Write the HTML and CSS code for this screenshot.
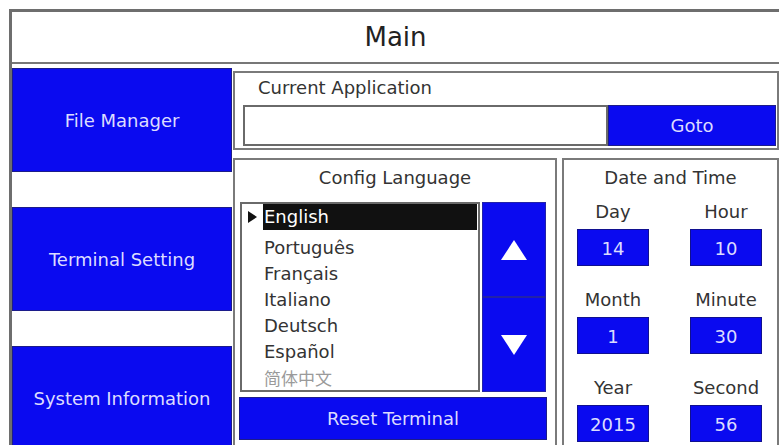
FILE: index.html
```html
<!DOCTYPE html>
<html lang="en">
<head>
    <meta charset="UTF-8">
    <meta name="viewport" content="width=device-width, initial-scale=1.0">
    <title>Main</title>
    <link rel="stylesheet" href="styles.css">
</head>
<body>
    <div class="screen">
        <div class="frame">
            <header class="title">Main</header>

            <div class="body">
                <nav class="menu">
                    <button class="menu-btn">File Manager</button>
                    <button class="menu-btn">Terminal Setting</button>
                    <button class="menu-btn">System Information</button>
                </nav>

                <main class="content">
                    <section class="panel app">
                        <div class="app-title">Current Application</div>
                        <div class="app-row">
                            <div class="app-field"></div>
                            <button class="goto">Goto</button>
                        </div>
                    </section>

                    <div class="lower">
                        <section class="panel lang">
                            <div class="panel-title">Config Language</div>
                            <div class="lang-row">
                                <ul class="lang-list">
                                    <li class="lang-item selected">
                                        <span class="marker">
                                            <svg width="9" height="12" viewBox="0 0 9 12"><polygon points="0,0 9,6 0,12" fill="#111"/></svg>
                                        </span>
                                        <span class="lang-name">English</span>
                                    </li>
                                    <li class="lang-item"><span class="marker"></span><span class="lang-name">Português</span></li>
                                    <li class="lang-item"><span class="marker"></span><span class="lang-name">Français</span></li>
                                    <li class="lang-item"><span class="marker"></span><span class="lang-name">Italiano</span></li>
                                    <li class="lang-item"><span class="marker"></span><span class="lang-name">Deutsch</span></li>
                                    <li class="lang-item"><span class="marker"></span><span class="lang-name">Español</span></li>
                                    <li class="lang-item"><span class="marker"></span><span class="lang-name cjk">简体中文</span></li>
                                </ul>
                                <div class="scroll">
                                    <button class="scroll-btn">
                                        <svg width="26" height="20" viewBox="0 0 26 20"><polygon points="13,0 26,20 0,20" fill="#fff"/></svg>
                                    </button>
                                    <button class="scroll-btn">
                                        <svg width="26" height="20" viewBox="0 0 26 20"><polygon points="0,0 26,0 13,20" fill="#fff"/></svg>
                                    </button>
                                </div>
                            </div>
                            <button class="reset">Reset Terminal</button>
                        </section>

                        <section class="panel clock">
                            <div class="panel-title">Date and Time</div>
                            <div class="clock-grid">
                                <div class="field"><div class="field-label">Day</div><div class="field-box">14</div></div>
                                <div class="field"><div class="field-label">Hour</div><div class="field-box">10</div></div>
                                <div class="field"><div class="field-label">Month</div><div class="field-box">1</div></div>
                                <div class="field"><div class="field-label">Minute</div><div class="field-box">30</div></div>
                                <div class="field"><div class="field-label">Year</div><div class="field-box">2015</div></div>
                                <div class="field"><div class="field-label">Second</div><div class="field-box">56</div></div>
                            </div>
                        </section>
                    </div>
                </main>
            </div>
        </div>
    </div>
</body>
</html>
```

FILE: styles.css
```css
body {
    margin: 0;
    background-color: #ffffff;
    font-family: "DejaVu Sans", Verdana, sans-serif;
    font-size: 18px;
    color: #333333;
}

button {
    font-family: inherit;
    font-size: 18px;
    margin: 0;
    padding: 0;
    cursor: pointer;
}

.screen {
    height: 445px;
    padding: 9px 0 0 9px;
    box-sizing: border-box;
    overflow: hidden;
}

.frame {
    height: 436px;
    border-top: 3px solid #6e6e6e;
    border-left: 3px solid #6e6e6e;
    box-sizing: border-box;
    overflow: hidden;
}

.title {
    height: 50px;
    line-height: 50px;
    text-align: center;
    font-size: 26px;
    color: #222222;
    border-bottom: 2px solid #777777;
}

.body {
    display: flex;
}

/* left menu */
.menu {
    width: 220px;
    padding-top: 4px;
    display: flex;
    flex-direction: column;
    gap: 35px;
}

.menu-btn {
    height: 104px;
    background-color: #0a0af0;
    border: 1px solid #1c1c8a;
    color: #dcdcff;
}

/* right side */
.content {
    flex: 1;
    padding-top: 7px;
    margin-left: 1px;
}

.panel {
    border: 2px solid #7a7a7a;
    box-sizing: border-box;
}

.app {
    height: 79px;
}

.app-title {
    padding: 3px 0 0 23px;
    line-height: 24px;
}

.app-row {
    display: flex;
    margin-top: 5px;
    padding: 0 1px 0 8px;
    height: 41px;
}

.app-field {
    flex: 1;
    border: 2px solid #6a6a6a;
    background-color: #ffffff;
}

.goto {
    width: 168px;
    background-color: #0a0af0;
    border: 1px solid #1c1c8a;
    color: #dcdcff;
}

.lower {
    display: flex;
    gap: 5px;
    margin-top: 8px;
}

.panel-title {
    padding-top: 6px;
    line-height: 24px;
    text-align: center;
}

/* config language */
.lang {
    width: 324px;
    height: 290px;
    border-bottom: none;
}

.lang-row {
    display: flex;
    gap: 2px;
    margin: 12px 0 0 5px;
    height: 190px;
}

.lang-list {
    list-style: none;
    margin: 0;
    padding: 0;
    width: 240px;
    border: 2px solid #6a6a6a;
    box-sizing: border-box;
}

.lang-item {
    display: flex;
    height: 26px;
    line-height: 26px;
}

.lang-item.selected {
    margin-bottom: 5px;
}

.marker {
    width: 21px;
    display: flex;
    align-items: center;
    justify-content: center;
}

.lang-name {
    padding-left: 1px;
}

.selected .lang-name {
    flex: 1;
    margin-right: 1px;
    background-color: #111111;
    color: #ffffff;
}

.cjk {
    font-family: "Noto Sans CJK SC", sans-serif;
    font-size: 17px;
    color: #9a9a9a;
}

.scroll {
    width: 64px;
    display: flex;
    flex-direction: column;
}

.scroll-btn {
    flex: 1;
    background-color: #0a0af0;
    border: 1px solid #2222a8;
    display: flex;
    align-items: center;
    justify-content: center;
}

.reset {
    display: block;
    width: 308px;
    height: 43px;
    margin: 5px 0 0 4px;
    background-color: #0a0af0;
    border: 1px solid #1c1c8a;
    color: #dcdcff;
}

/* date and time */
.clock {
    flex: 1;
    height: 290px;
    border-bottom: none;
}

.clock-grid {
    display: grid;
    grid-template-columns: 72px 72px;
    column-gap: 41px;
    row-gap: 22px;
    margin-top: 10px;
    padding-left: 13px;
}

.field-label {
    line-height: 24px;
    text-align: center;
}

.field-box {
    margin-top: 5px;
    height: 37px;
    line-height: 37px;
    text-align: center;
    background-color: #0a0af0;
    border: 1px solid #101090;
    box-sizing: border-box;
    color: #dcdcff;
}
```
